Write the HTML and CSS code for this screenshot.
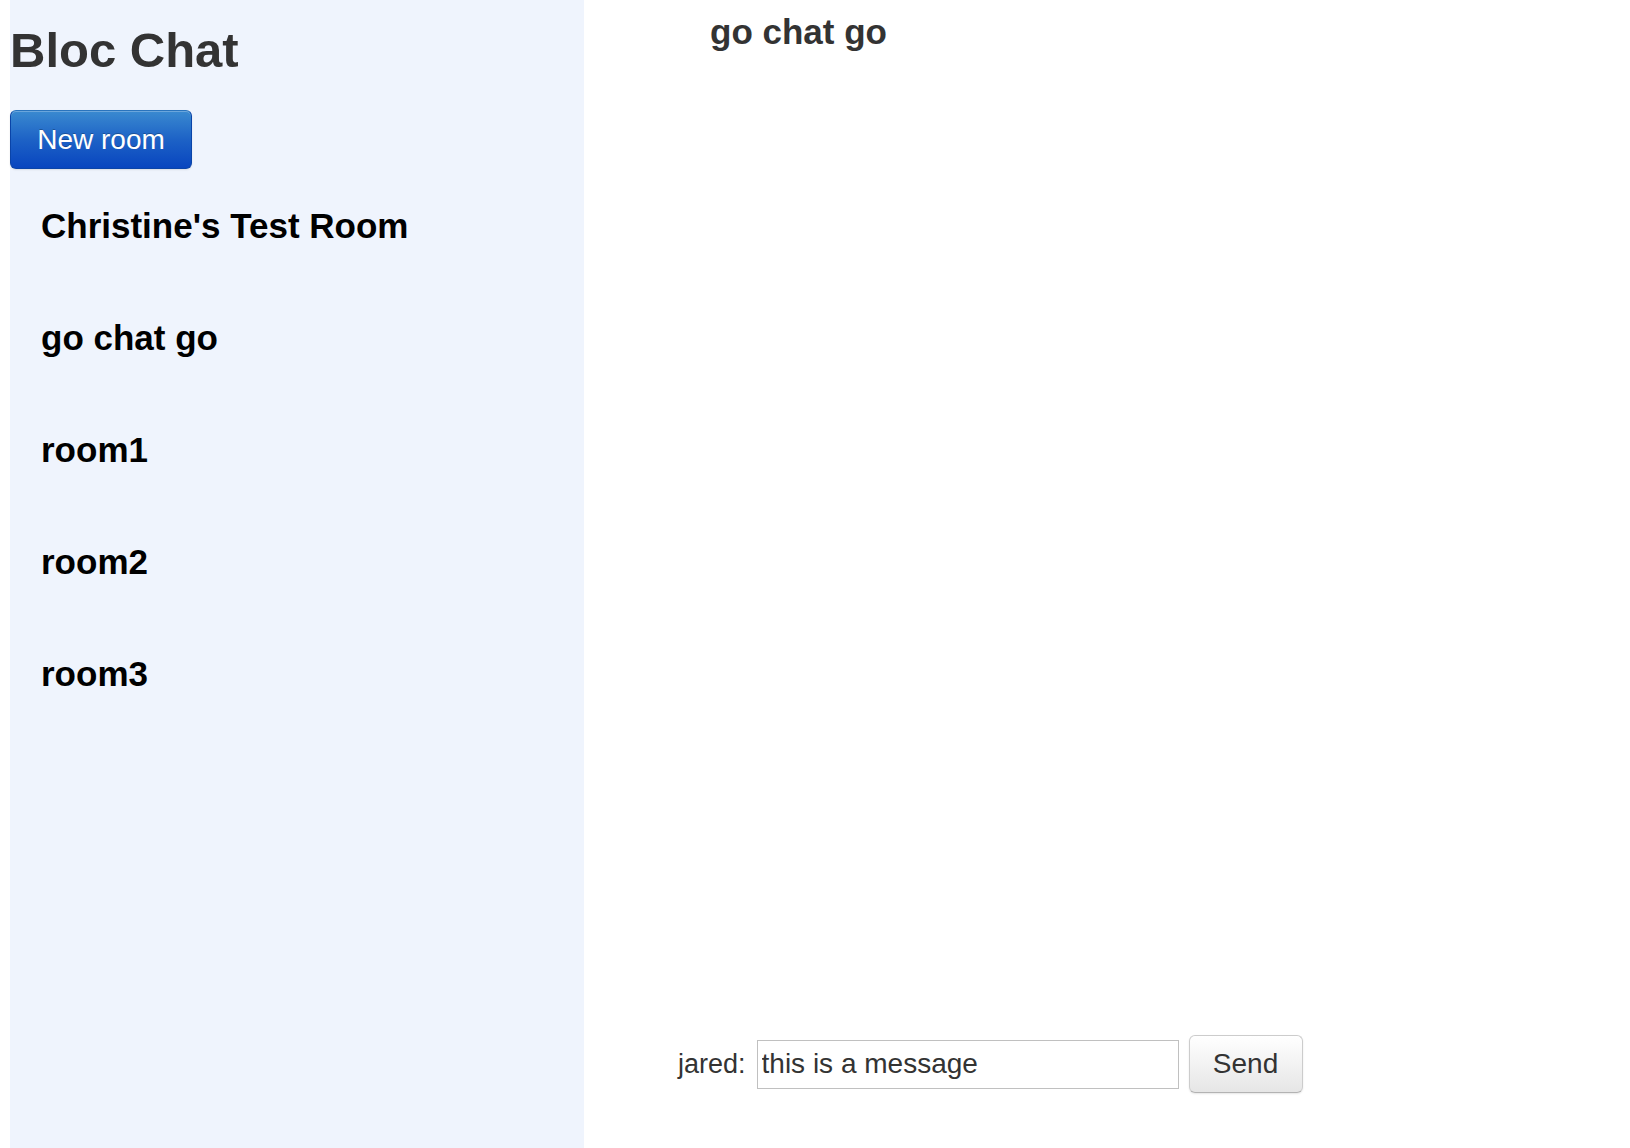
FILE: index.html
```html
<!DOCTYPE html>
<html>
<head>
<meta charset="utf-8">
<title>Bloc Chat</title>
<link rel="stylesheet" href="styles.css">
</head>
<body>
<div class="app">
  <aside class="sidebar">
    <h1 class="brand">Bloc Chat</h1>
    <button class="btn-primary" type="button">New room</button>
    <ul class="rooms">
      <li class="room">Christine's Test Room</li>
      <li class="room">go chat go</li>
      <li class="room">room1</li>
      <li class="room">room2</li>
      <li class="room">room3</li>
    </ul>
  </aside>
  <main class="chat">
    <h2 class="room-title">go chat go</h2>
    <form class="composer">
      <label class="user" for="msg">jared:</label>
      <input class="msg-input" id="msg" type="text" value="this is a message">
      <button class="btn-send" type="button">Send</button>
    </form>
  </main>
</div>
</body>
</html>
```

FILE: styles.css
```css
html, body {
  margin: 0;
  padding: 0;
  height: 100%;
  background: #ffffff;
  font-family: "Liberation Sans", Arial, Helvetica, sans-serif;
}

.app {
  display: flex;
  height: 100vh;
  padding-left: 10px;
  box-sizing: border-box;
}

.sidebar {
  width: 574px;
  flex: 0 0 574px;
  background: #eff4fd;
  display: flex;
  flex-direction: column;
  align-items: flex-start;
}

.brand {
  margin: 22px 0 0 0;
  font-size: 49px;
  font-weight: bold;
  color: #333333;
  line-height: normal;
}

.btn-primary {
  margin-top: 32px;
  width: 182px;
  height: 59px;
  border-radius: 6px;
  border: 1px solid #0a44a8;
  border-top-color: #2a74bd;
  background: linear-gradient(to bottom, #3a8ad0 0%, #1d62c6 50%, #0845bf 100%);
  color: #ffffff;
  font-family: "Liberation Sans", Arial, sans-serif;
  font-size: 28px;
  text-shadow: 0 -1px 0 rgba(0, 0, 0, 0.25);
  box-shadow: inset 0 1px 0 rgba(255, 255, 255, 0.25), 0 1px 2px rgba(0, 0, 0, 0.1);
  padding: 0;
  cursor: pointer;
}

.rooms {
  list-style: none;
  margin: 37px 0 0 0;
  padding: 0 0 0 31px;
}

.room {
  font-size: 35px;
  font-weight: bold;
  line-height: 40px;
  color: #000000;
  margin-bottom: 72px;
}

.chat {
  flex: 1;
  display: flex;
  flex-direction: column;
  padding: 12px 0 55px 0;
  box-sizing: border-box;
}

.room-title {
  margin: 0 0 0 126px;
  font-size: 35px;
  font-weight: bold;
  color: #333333;
  line-height: normal;
}

.composer {
  margin: auto 0 0 94px;
  display: flex;
  align-items: center;
}

.user {
  font-size: 27px;
  color: #333333;
  line-height: normal;
  margin-right: 11px;
}

.msg-input {
  width: 422px;
  height: 49px;
  box-sizing: border-box;
  border: 1px solid #c0c0c0;
  padding: 0 4px;
  font-family: "Liberation Sans", Arial, sans-serif;
  font-size: 28px;
  color: #333333;
  background: #ffffff;
  outline: none;
  margin: 0;
}

.btn-send {
  margin-left: 10px;
  width: 114px;
  height: 58px;
  box-sizing: border-box;
  border: 1px solid #cccccc;
  border-bottom-color: #b3b3b3;
  border-radius: 6px;
  background: linear-gradient(to bottom, #ffffff 0%, #e6e6e6 100%);
  color: #333333;
  font-family: "Liberation Sans", Arial, sans-serif;
  font-size: 28px;
  box-shadow: inset 0 1px 0 rgba(255, 255, 255, 0.2), 0 1px 2px rgba(0, 0, 0, 0.1);
  padding: 0;
  cursor: pointer;
}
```
